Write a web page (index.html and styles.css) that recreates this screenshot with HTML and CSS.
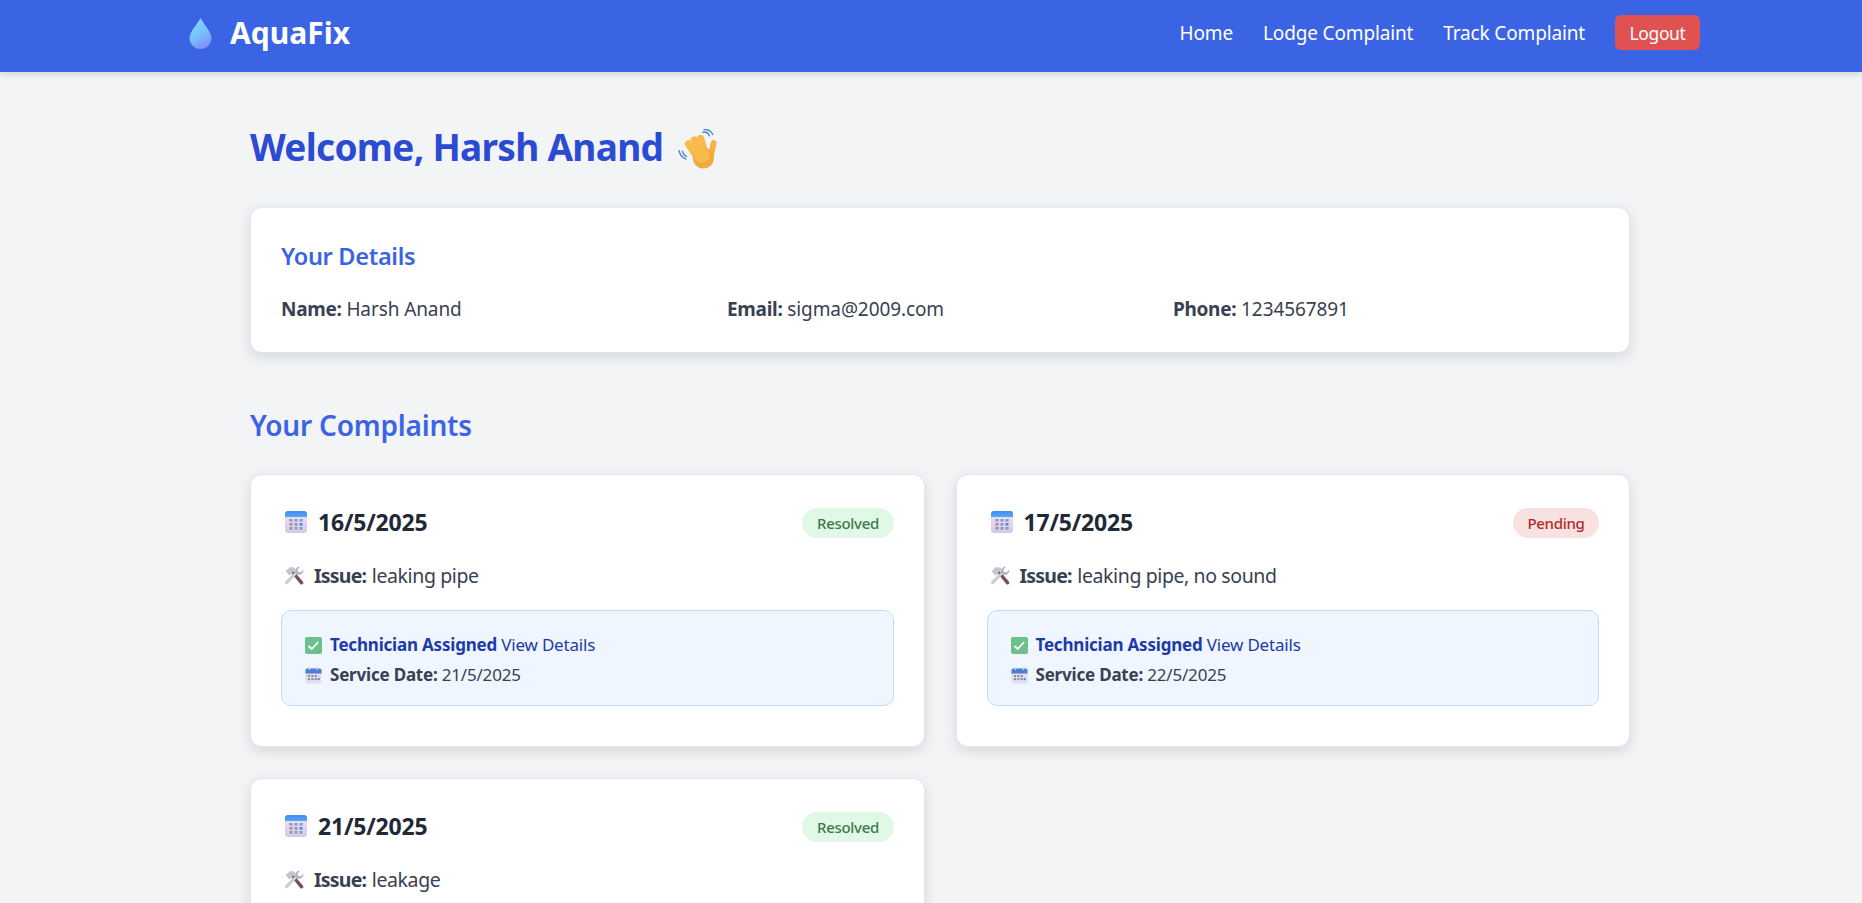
FILE: index.html

```html
<!DOCTYPE html>
<html lang="en">
<head>
  <meta charset="UTF-8">
  <title>AquaFix</title>
  <link rel="stylesheet" href="styles.css">
</head>
<body>
  <svg class="icon-defs" width="0" height="0" aria-hidden="true">
    <defs>
      <linearGradient id="dropFill" x1="0.2" y1="0" x2="0.6" y2="1">
        <stop offset="0" stop-color="#7fdcf8"/>
        <stop offset="0.6" stop-color="#77bdfb"/>
        <stop offset="1" stop-color="#7f8ef6"/>
      </linearGradient>
      <linearGradient id="calBody" x1="0" y1="0" x2="0" y2="1">
        <stop offset="0" stop-color="#ece6f5"/>
        <stop offset="1" stop-color="#d5c9ea"/>
      </linearGradient>
      <linearGradient id="calTop" x1="0" y1="0" x2="0" y2="1">
        <stop offset="0" stop-color="#3f8cf2"/>
        <stop offset="1" stop-color="#56a8f5"/>
      </linearGradient>
      <symbol id="calendar" viewBox="0 0 22 22">
        <rect x="0" y="0" width="22" height="22" rx="3" fill="url(#calBody)"/>
        <path d="M0 6V3a3 3 0 0 1 3-3h16a3 3 0 0 1 3 3v3z" fill="url(#calTop)"/>
        <g fill="#9b94b0">
          <rect x="4.500" y="8" width="3" height="2.600"/><rect x="9.500" y="8" width="3" height="2.600"/><rect x="14.500" y="8" width="3" height="2.600"/>
          <rect x="4.500" y="12" width="3" height="2.600"/><rect x="9.500" y="12" width="3" height="2.600"/><rect x="14.500" y="12" width="3" height="2.600" fill="#3f8cf2"/>
          <rect x="4.500" y="16" width="3" height="2.600"/><rect x="9.500" y="16" width="3" height="2.600"/><rect x="14.500" y="16" width="3" height="2.600"/>
        </g>
      </symbol>
      <symbol id="calendar-small" viewBox="0 0 18 18">
        <rect x="0.500" y="1.500" width="17" height="16" rx="2" fill="#e2dcec"/>
        <path d="M0.500 7V3.500a2 2 0 0 1 2-2h13a2 2 0 0 1 2 2V7z" fill="#4a7fd6"/>
        <rect x="4" y="0" width="1.600" height="3.400" rx="0.800" fill="#c9d4e6"/>
        <rect x="12.400" y="0" width="1.600" height="3.400" rx="0.800" fill="#c9d4e6"/>
        <g fill="#8f8a9e">
          <rect x="3" y="8.600" width="2.400" height="2"/><rect x="6.600" y="8.600" width="2.400" height="2"/><rect x="10.200" y="8.600" width="2.400" height="2"/>
          <rect x="3" y="11.800" width="2.400" height="2"/><rect x="6.600" y="11.800" width="2.400" height="2"/><rect x="10.200" y="11.800" width="2.400" height="2"/><rect x="13.400" y="11.800" width="2.200" height="2" fill="#3f8cf2"/>
        </g>
      </symbol>
      <symbol id="tools" viewBox="0 0 20 20">
        <path d="M7.600 7.200l2.200-2.200 9 10.600a1.600 1.600 0 0 1-.2 2.400 1.600 1.600 0 0 1-2.300-.1z" fill="#7d4a5e"/>
        <path d="M1.600 5.200L6 1l4.800.8.800 2.200-2.400 1-1.600 2.600-2 1.800z" fill="#c7c3cc"/>
        <path d="M13.200 7.800L4 17.600a1.700 1.700 0 0 1-2.500-2.400L11 6z" fill="#cfcbd4"/>
        <path d="M19.400 3.400a4.600 4.600 0 0 1-6.200 5L11 6a4.600 4.600 0 0 1 5-5.200l-2.600 2.600.5 2.600 2.600.6z" fill="#b3afb9"/>
      </symbol>
    </defs>
  </svg>

  <header class="navbar">
    <div class="brand">
      <svg class="brand-drop" viewBox="0 0 22 31" width="23" height="31">
        <path d="M11 0C8 6 0 14 0 20a11 11 0 0 0 22 0C22 14 14 6 11 0z" fill="url(#dropFill)"/>
      </svg>
      <span class="brand-name">AquaFix</span>
    </div>
    <nav class="nav-links">
      <a href="#">Home</a>
      <a href="#">Lodge Complaint</a>
      <a href="#">Track Complaint</a>
      <button class="logout">Logout</button>
    </nav>
  </header>

  <main class="page">
    <h1 class="welcome">Welcome, Harsh Anand
      <svg class="wave" viewBox="0 0 37 37" width="40" height="40">
        <g fill="none" stroke="#f9bb4c" stroke-width="6.400" stroke-linecap="round">
          <path d="M9.500 13.500l7 11"/>
          <path d="M15 10l5.500 12"/>
          <path d="M21 8.500l3.500 12"/>
          <path d="M33 13l-2.500 12" stroke="#f6b246" stroke-width="5.400"/>
        </g>
        <ellipse cx="23.500" cy="27" rx="9.800" ry="9.600" fill="#f4a93f"/>
        <ellipse cx="22" cy="24.500" rx="7.500" ry="6.500" fill="#f9bb4c"/>
        <g fill="none" stroke="#4a86c9" stroke-width="1.300" stroke-linecap="round">
          <path d="M23 3c2.500-.6 5 .8 6 3.300"/>
          <path d="M24 .6c3.500-.6 7 1.300 8.200 4.600"/>
          <path d="M1 20c.6 3.500 3 6.500 6.500 7.800"/>
          <path d="M4 20.500c.5 2 1.800 3.800 3.800 4.800"/>
        </g>
      </svg>
    </h1>

    <section class="card details">
      <h2 class="details-title">Your Details</h2>
      <div class="details-grid">
        <p><strong>Name:</strong> Harsh Anand</p>
        <p><strong>Email:</strong> sigma@2009.com</p>
        <p><strong>Phone:</strong> 1234567891</p>
      </div>
    </section>

    <h2 class="section-title">Your Complaints</h2>

    <div class="complaints">
      <article class="card complaint">
        <div class="complaint-head">
          <span class="complaint-date"><svg class="ic-cal"><use href="#calendar"/></svg>16/5/2025</span>
          <span class="pill resolved">Resolved</span>
        </div>
        <p class="issue"><svg class="ic-tools"><use href="#tools"/></svg><span><strong>Issue:</strong> leaking pipe</span></p>
        <div class="tech-box">
          <p class="tech-line">
            <svg class="ic-check" viewBox="0 0 17 17"><rect width="17" height="17" rx="2" fill="#6cc08b"/><path d="M3.500 9l3.200 3 6.500-7" fill="none" stroke="#fff" stroke-width="1.800"/></svg>
            <span><strong>Technician Assigned</strong> <a href="#">View Details</a></span>
          </p>
          <p class="service-line"><svg class="ic-cal-small"><use href="#calendar-small"/></svg><span><strong>Service Date:</strong> 21/5/2025</span></p>
        </div>
      </article>

      <article class="card complaint">
        <div class="complaint-head">
          <span class="complaint-date"><svg class="ic-cal"><use href="#calendar"/></svg>17/5/2025</span>
          <span class="pill pending">Pending</span>
        </div>
        <p class="issue"><svg class="ic-tools"><use href="#tools"/></svg><span><strong>Issue:</strong> leaking pipe, no sound</span></p>
        <div class="tech-box">
          <p class="tech-line">
            <svg class="ic-check" viewBox="0 0 17 17"><rect width="17" height="17" rx="2" fill="#6cc08b"/><path d="M3.500 9l3.200 3 6.500-7" fill="none" stroke="#fff" stroke-width="1.800"/></svg>
            <span><strong>Technician Assigned</strong> <a href="#">View Details</a></span>
          </p>
          <p class="service-line"><svg class="ic-cal-small"><use href="#calendar-small"/></svg><span><strong>Service Date:</strong> 22/5/2025</span></p>
        </div>
      </article>

      <article class="card complaint">
        <div class="complaint-head">
          <span class="complaint-date"><svg class="ic-cal"><use href="#calendar"/></svg>21/5/2025</span>
          <span class="pill resolved">Resolved</span>
        </div>
        <p class="issue"><svg class="ic-tools"><use href="#tools"/></svg><span><strong>Issue:</strong> leakage</span></p>
      </article>
    </div>
  </main>
</body>
</html>
```

FILE: styles.css

```css
* {
  box-sizing: border-box;
}

html, body {
  height: 903px;
  overflow: hidden;
}

body {
  margin: 0;
  background: #f3f4f6;
  font-family: "Noto Sans", "Open Sans", sans-serif;
  color: #374151;
}

p, h1, h2 {
  margin: 0;
}

.icon-defs {
  position: absolute;
}

.navbar {
  height: 72px;
  background: #3b64e5;
  box-shadow: 0 2px 8px rgba(0, 0, 0, 0.15);
  padding: 0 162px 0 189px;
  display: flex;
  align-items: center;
  justify-content: space-between;
}

.brand {
  display: flex;
  align-items: center;
  gap: 18px;
  margin-top: -6px;
}

.brand-drop {
  display: block;
}

.brand-name {
  font-size: 30px;
  font-weight: 700;
  line-height: 36px;
  color: #fff;
}

.nav-links {
  display: flex;
  align-items: center;
  gap: 30px;
  margin-top: -7px;
}

.nav-links a {
  color: #fff;
  text-decoration: none;
  font-size: 19px;
  letter-spacing: -0.15px;
}

.logout {
  width: 85px;
  height: 35px;
  border: 0;
  border-radius: 6px;
  background: #e05252;
  color: #fff;
  font-family: inherit;
  font-size: 17.5px;
  letter-spacing: -0.4px;
}

.page {
  width: 1380px;
  margin-left: 250px;
  padding-top: 51px;
}

.welcome {
  font-size: 37px;
  font-weight: 700;
  letter-spacing: -0.7px;
  line-height: 48px;
  color: #2b4bd2;
  display: flex;
  align-items: center;
  gap: 15px;
}

.wave {
  margin-top: 3px;
}

.card {
  background: #fff;
  border: 1px solid #dfe7f8;
  border-radius: 12px;
  box-shadow: 0 4px 14px rgba(0, 0, 0, 0.12);
}

.details {
  margin-top: 36px;
  height: 146px;
  padding: 32px 30px 0;
}

.details-title {
  font-size: 23.5px;
  font-weight: 600;
  letter-spacing: -0.3px;
  line-height: 32px;
  color: #3b64e5;
}

.details-grid {
  display: grid;
  grid-template-columns: repeat(3, 1fr);
  column-gap: 20px;
  margin-top: 24px;
  font-size: 19px;
  line-height: 26px;
  letter-spacing: -0.1px;
}

.details-grid strong {
  letter-spacing: -0.3px;
}

.section-title {
  margin-top: 54px;
  font-size: 28px;
  font-weight: 600;
  letter-spacing: -0.2px;
  line-height: 36px;
  color: #3b64e5;
}

.complaints {
  margin-top: 31px;
  display: grid;
  grid-template-columns: repeat(2, 1fr);
  gap: 31px;
}

.complaint {
  padding: 31px 30px 40px;
  min-height: 273px;
}

.complaint-head {
  display: flex;
  align-items: center;
  justify-content: space-between;
  height: 32px;
}

.complaint-date {
  display: flex;
  align-items: center;
  gap: 11px;
  padding-left: 4px;
  font-size: 23px;
  font-weight: 700;
  letter-spacing: -0.2px;
  color: #1f2937;
}

.ic-cal {
  width: 22px;
  height: 22px;
}

.pill {
  height: 30px;
  margin-top: 2px;
  padding: 0 14.5px;
  border-radius: 15px;
  display: flex;
  align-items: center;
  font-size: 15px;
  font-weight: 500;
  letter-spacing: -0.3px;
}

.resolved {
  background: #e0f9e7;
  color: #3d7a4b;
}

.pending {
  background: #f8e1e1;
  color: #b22b2b;
}

.issue {
  margin-top: 24px;
  padding-left: 3px;
  display: flex;
  align-items: center;
  gap: 10px;
  font-size: 19.5px;
  line-height: 28px;
  letter-spacing: -0.4px;
}

.issue strong {
  letter-spacing: -0.8px;
  margin-right: 1px;
}

.ic-tools {
  width: 20px;
  height: 20px;
}

.tech-box {
  margin-top: 20px;
  height: 96px;
  padding: 19px 23px 0;
  background: #eff6ff;
  border: 1px solid #bfdbfe;
  border-radius: 10px;
  font-size: 17px;
  line-height: 30px;
  letter-spacing: -0.2px;
}

.tech-line, .service-line {
  display: flex;
  align-items: center;
}

.tech-line {
  color: #1e3aa8;
}

.tech-line a {
  color: #1e3aa8;
  text-decoration: none;
}

.ic-check, .ic-cal-small {
  width: 17px;
  height: 17px;
  margin-right: 8px;
}
```
